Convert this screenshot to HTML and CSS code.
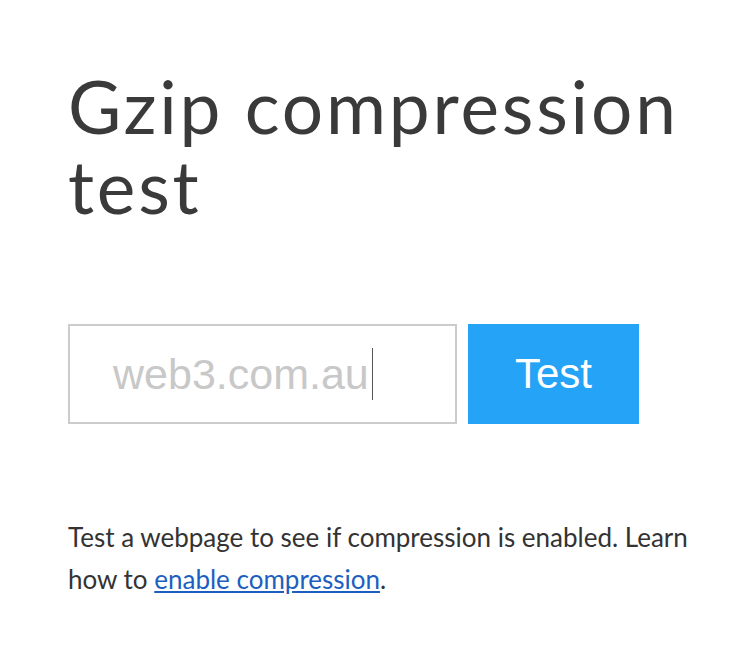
FILE: index.html
```html
<!DOCTYPE html>
<html lang="en">
<head>
    <meta charset="UTF-8">
    <meta name="viewport" content="width=device-width, initial-scale=1.0">
    <title>Gzip compression test</title>
    <link rel="stylesheet" href="styles.css">
</head>
<body>
    <div class="page">
        <h1>Gzip compression test</h1>
        <form class="test-form">
            <div class="url-box">
                <span class="url-text">web3.com.au</span><span class="caret"></span>
            </div>
            <button type="submit">Test</button>
        </form>
        <p class="intro">Test a webpage to see if compression is enabled. Learn how to <a href="#">enable compression</a>.</p>
    </div>
</body>
</html>
```

FILE: styles.css
```css
/* General Styling */
body {
    margin: 0;
    background: #fff;
    font-family: Lato, 'Open Sans', sans-serif;
    color: #333;
}

.page {
    padding: 66px 40px 0 68px;
}

h1 {
    margin: 0;
    font-size: 73px;
    font-weight: 400;
    line-height: 80px;
    letter-spacing: 2.8px;
    color: #3a3a3a;
}

.test-form {
    display: flex;
    gap: 11px;
    margin-top: 98px;
}

.url-box {
    box-sizing: border-box;
    width: 389px;
    height: 100px;
    border: 2px solid #ccc;
    padding-left: 43px;
    display: flex;
    align-items: center;
    font-family: 'Liberation Sans', Arial, sans-serif;
    font-size: 43px;
    color: #c8c8c8;
}

.caret {
    display: inline-block;
    width: 1px;
    height: 52px;
    margin-left: 3px;
    background: #555;
}

button {
    width: 171px;
    height: 100px;
    border: none;
    background: #25a3f6;
    color: #fff;
    font-family: 'Liberation Sans', Arial, sans-serif;
    font-size: 42px;
    cursor: pointer;
}

.intro {
    margin: 92px 0 0;
    font-size: 26px;
    line-height: 42px;
}

.intro a {
    color: #1c5fc0;
}
```
